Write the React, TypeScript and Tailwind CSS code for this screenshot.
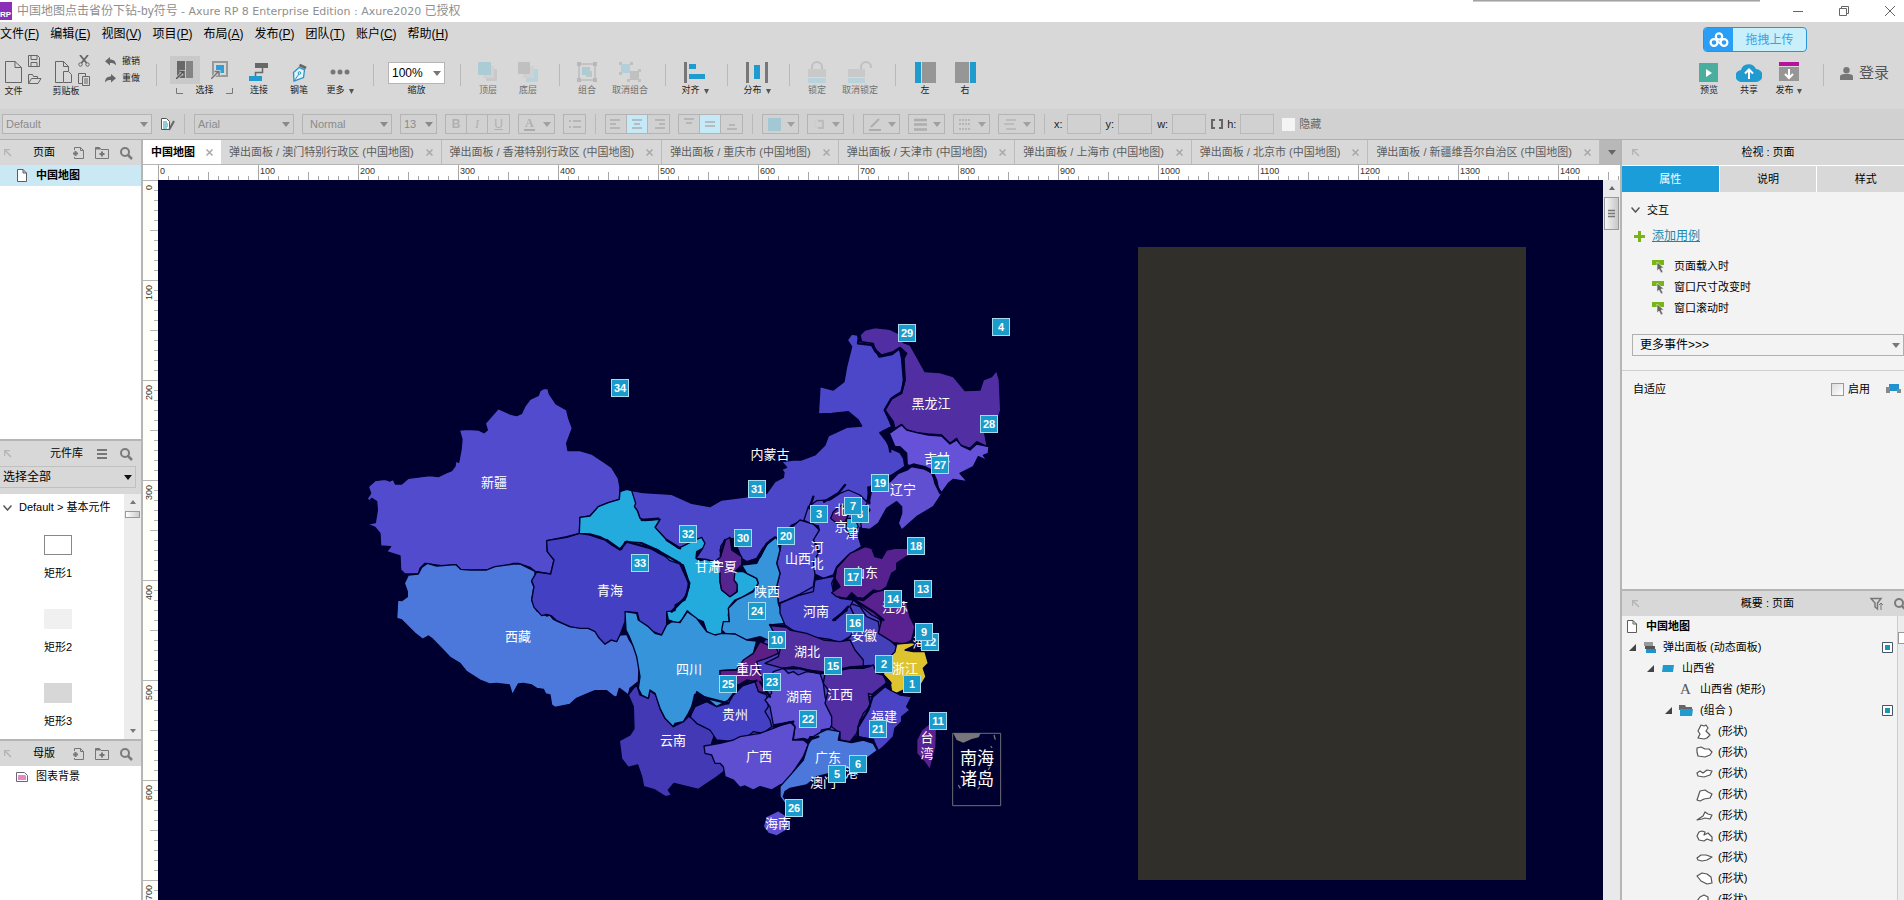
import type { ReactNode } from 'react'

const NAVY = '#000030'

type Shape = { fill: string; d: string }

// Province outlines, drawn at three times canvas scale in four sheets
const WEST: Shape[] = [
  { fill: '#524bce', d: '55,350 75,332 105,328 120,333 130,328 136,342 155,342 175,325 215,320 240,317 265,320 290,308 305,302 315,288 318,272 326,277 333,240 336,208 328,180 355,178 385,180 402,188 412,180 406,160 445,116 480,132 500,137 515,130 525,108 540,88 565,76 570,62 582,55 594,56 598,72 618,102 650,120 656,145 667,175 650,220 654,242 690,242 725,252 760,275 785,292 805,325 810,352 808,388 775,398 745,410 720,438 690,442 688,490 650,500 590,512 592,545 612,570 602,612 555,604 540,592 505,580 490,580 470,590 430,592 410,600 350,602 330,598 318,584 280,588 225,580 210,595 205,612 165,612 152,600 150,558 110,545 122,530 92,528 90,490 75,472 52,462 76,458 82,420 80,395 65,385 57,394 52,385 62,370' },
  { fill: '#4b78da', d: '205,612 215,592 232,580 260,588 318,584 332,598 360,600 410,600 435,590 490,582 510,582 555,604 555,618 545,635 552,650 545,690 560,722 590,738 600,735 610,748 660,770 715,775 735,780 745,800 765,822 785,810 800,812 810,795 830,793 838,810 855,835 868,885 865,935 840,955 835,975 808,955 800,982 790,978 770,962 735,962 715,970 680,985 660,1003 615,1012 605,1005 600,975 587,972 580,958 560,955 545,945 520,940 505,942 487,975 478,945 440,940 420,942 390,930 350,905 330,880 300,862 270,830 245,805 235,798 218,808 195,790 155,750 140,745 143,690 155,692 172,680 172,665 163,640 175,615' },
  { fill: '#4340c3', d: '590,512 650,502 690,490 720,495 765,510 785,525 810,540 820,512 850,515 875,520 930,552 1000,585 1000,600 1015,640 1015,660 1000,690 975,705 978,725 950,730 950,765 935,795 910,785 895,782 870,760 862,728 828,725 825,755 812,790 800,815 783,810 765,822 748,805 735,785 715,775 690,775 660,770 620,752 605,738 590,733 575,737 552,712 545,690 552,650 545,632 560,606 602,612 612,570 592,545' },
]

const CENTRE: Shape[] = [
  { fill: '#4840bd', d: '540,440 600,440 700,410 700,470 780,480 840,540 860,610 850,700 850,750 780,850 770,890 700,880 620,895 560,885 500,890 440,920 350,900 300,840 400,770 470,700 470,640 520,560' },
  { fill: '#4c47c9', d: '95,152 130,158 215,163 275,190 330,200 365,180 430,172 500,160 525,125 550,112 552,98 545,88 560,82 545,65 580,60 605,60 645,45 675,15 685,-12 740,-38 785,-42 775,-60 745,-85 695,-80 655,-78 660,-160 700,-150 732,-175 740,-220 755,-280 742,-300 755,-318 772,-315 780,-295 810,-292 825,-265 845,-250 880,-262 900,-275 905,-240 910,-180 905,-145 880,-130 855,-90 875,-40 845,-25 870,25 905,40 920,75 895,95 865,110 810,140 802,180 790,195 760,220 700,240 650,250 600,245 575,255 560,275 545,300 520,295 500,310 485,330 470,355 440,365 425,355 415,330 400,295 375,300 360,330 365,355 345,365 318,358 288,355 308,325 262,312 235,325 200,300 165,262 180,238 135,242 120,235 112,212 103,200' },
  { fill: '#22abdc', d: '-60,232 -30,228 -5,200 25,188 58,178 60,155 80,148 95,152 107,190 103,200 112,212 120,235 135,242 180,238 165,262 200,300 235,325 262,312 285,300 305,292 315,310 308,325 290,335 288,355 300,362 318,358 345,368 360,395 360,425 365,450 390,470 412,455 410,430 400,420 402,395 430,395 470,415 475,430 460,452 430,470 405,480 388,500 385,525 388,545 370,558 362,590 330,582 320,575 310,545 285,535 262,512 245,540 235,550 205,540 200,515 225,512 228,495 255,480 262,455 268,440 262,410 250,375 210,362 175,330 125,308 75,305 65,328 55,325 20,300 0,290 -30,282 -62,280' },
  { fill: '#534bcd', d: '612,240 625,200 650,182 690,180 720,160 745,150 780,165 800,185 825,215 825,240 805,265 780,262 775,290 785,320 745,345 710,380 700,405 670,415 640,400 640,365 660,330 640,300 658,270 655,258 630,252' },
  { fill: '#5c2286', d: '700,215 725,195 750,215 735,245 710,250 692,235' },
  { fill: '#22abdc', d: '740,235 765,235 775,260 750,290 738,265' },
  { fill: '#5049c9', d: '545,300 560,275 600,240 640,252 658,270 640,300 655,340 640,365 645,405 640,440 600,462 560,480 535,490 530,440 540,400 530,370 540,330' },
  { fill: '#3594da', d: '530,292 540,330 530,370 540,400 530,440 535,490 545,520 555,550 510,555 530,590 505,600 480,590 440,600 405,582 375,580 365,570 370,545 388,545 385,505 410,480 460,455 475,430 470,415 440,400 425,375 470,370 490,330 510,300' },
  { fill: '#55248f', d: '375,300 390,292 395,330 425,350 425,375 405,395 402,420 412,435 410,455 390,470 365,450 360,425 360,400 345,365 362,350 362,320' },
  { fill: '#4340b8', d: '750,490 780,500 800,530 835,545 840,580 870,600 890,620 890,640 850,670 850,700 820,690 780,680 760,690 740,640 730,610 750,590 735,560 700,545 720,520 740,505' },
  { fill: '#4340c3', d: '540,490 600,465 640,455 645,420 670,415 705,408 695,430 700,455 720,475 760,480 750,500 760,520 770,560 750,590 720,608 690,598 600,585 555,555 540,520' },
  { fill: '#4339b5', d: '85,765 100,745 110,735 120,765 145,775 150,752 168,765 180,805 195,835 220,860 250,845 270,825 290,850 330,870 345,880 335,910 368,920 397,975 349,1012 295,1048 222,1030 205,1050 215,1066 196,1070 165,1050 131,1040 125,1010 113,975 85,982 65,957 58,902 90,885 102,866 100,800' },
  { fill: '#3594da', d: '75,515 110,520 115,540 145,560 165,580 185,585 200,555 215,545 240,548 262,515 290,535 320,575 345,585 365,580 405,582 440,600 470,603 460,640 430,662 410,688 360,692 362,710 385,728 400,760 385,780 350,800 320,775 290,755 280,790 265,820 250,845 225,850 220,860 195,835 180,805 165,760 150,750 145,775 125,765 115,745 120,710 110,650 100,620 88,590 78,570' },
  { fill: '#5d1f86', d: '460,640 480,605 530,625 535,640 500,655 470,665 480,700 490,730 500,760 475,755 465,725 440,720 415,735 385,725 360,705 360,692 410,690 430,660' },
  { fill: '#4340c3', d: '385,790 400,765 430,735 465,725 475,755 500,765 505,800 495,815 510,840 515,860 490,880 460,875 430,900 400,905 350,900 330,870 290,850 270,830 285,800 320,785 350,800' },
]

const SOUTH: Shape[] = [
  { fill: '#562290', d: '290,85 330,40 375,20 395,25 405,50 425,55 440,30 465,25 500,25 530,40 500,50 470,70 470,90 455,100 440,140 420,155 400,150 370,175 350,172 335,158 320,175 290,170 275,158 300,140 285,115' },
  { fill: '#5a2190', d: '330,172 350,178 370,182 400,158 430,150 460,160 500,190 510,230 525,260 515,300 495,312 460,308 440,295 415,280 425,240 395,225 370,205' },
  { fill: '#ddc42f', d: '470,312 520,308 525,315 495,330 520,335 555,335 565,370 550,385 558,410 540,440 520,460 490,450 470,460 455,455 450,425 430,405 432,385 455,370 455,345 465,335' },
  { fill: '#512f9e', d: '90,255 130,255 150,270 200,280 250,300 300,305 330,300 345,330 370,360 370,380 330,385 255,400 245,395 200,390 160,380 130,385 75,370 115,350 120,330 110,300 100,275' },
  { fill: '#5d4fd0', d: '130,385 145,400 160,395 175,405 200,395 240,400 250,430 255,470 270,510 280,545 270,565 245,570 235,590 210,590 205,600 190,595 160,600 165,560 155,545 100,555 90,500 75,480 95,460 90,430 100,395' },
  { fill: '#512fa2', d: '255,400 330,385 370,385 400,375 410,400 430,405 440,430 400,465 385,460 390,495 360,540 350,580 330,605 300,600 300,580 275,560 275,530 255,490 265,450 250,430' },
  { fill: '#4a43c4', d: '400,470 435,440 450,450 480,465 515,470 500,500 510,510 485,530 485,545 465,565 460,590 430,620 415,632 400,600 355,590 355,560 370,520 390,500 388,470' },
  { fill: '#5d4fd0', d: '-108,618 -60,610 -20,600 0,590 60,580 100,565 150,545 165,560 158,600 190,600 205,612 190,650 160,695 140,730 120,735 95,750 60,740 40,750 15,738 0,742 -20,720 -45,710 -50,680 -60,670 -75,670 -85,645 -105,640' },
  { fill: '#4b78da', d: '220,590 240,578 262,568 300,575 295,600 335,608 370,600 400,610 412,632 380,655 350,680 310,690 270,700 230,710 200,735 150,745 135,755 130,770 145,790 135,792 120,770 120,740 160,695 190,660 205,612' },
  { fill: '#5d4fd0', d: '115,812 135,825 150,850 140,870 110,888 85,880 70,860 78,830' },
  { fill: '#5a2190', d: '575,545 590,560 588,620 575,670 570,690 555,668 530,640 530,600 545,570' },
]

const NORTH_EAST: Shape[] = [
  { fill: '#512fa2', d: '270,75 285,60 315,53 360,58 385,70 400,98 420,105 440,140 465,185 510,188 550,200 585,242 630,240 640,210 665,200 680,182 688,210 692,300 680,340 640,345 645,375 652,410 620,395 600,415 570,405 560,385 540,400 515,375 475,372 440,368 410,360 395,343 375,355 370,335 345,300 365,265 395,250 405,210 400,150 410,130 390,112 370,125 335,135 315,118 310,100 275,95' },
  { fill: '#6652d8', d: '375,358 395,345 410,360 440,368 475,375 515,378 540,402 560,390 575,408 600,420 620,402 657,410 655,430 640,436 652,452 625,440 610,470 570,490 592,515 550,508 535,520 515,548 505,535 500,510 485,480 465,470 430,462 412,470 410,430 390,410 375,410 358,370' },
  { fill: '#614fd2', d: '430,465 465,475 485,490 495,515 515,552 490,590 440,620 395,660 385,640 395,610 395,590 380,575 350,595 325,640 300,658 275,655 272,640 300,600 288,585 300,565 305,540 360,515 385,490 412,480' },
]

// Wider gaps where neighbouring provinces pull apart
const GAPS: { at: string; d: string }[] = [
  { at: 'translate(612 130) scale(.33333)', d: 'M742 612 738 640 782 645 802 680 840 672 862 655 M862 655 875 690 878 750 868 788 838 806 818 840 845 895 M805 908 830 940 835 965 M862 962 876 985 880 1010 850 1030 828 1050 M885 1006 935 1015 965 1030 970 1060 985 1090' },
  { at: 'translate(600 440) scale(.33333)', d: 'M640 170 628 205 M672 185 715 160 735 135 M805 142 808 190 M125 240 175 236 M240 325 200 300 M20 300 60 328 80 305 170 330 240 370 268 430 258 470 215 515 M480 350 500 312 525 292 M375 300 362 345 M430 735 470 722 M480 725 510 770 M270 830 285 765 385 790 M700 540 740 510 M510 555 555 560' },
  { at: 'translate(740 540) scale(.33333)', d: 'M130 385 180 385 240 400 330 382 390 378 M440 430 400 462 385 510 355 560 M100 560 160 545 M355 592 400 600 M205 600 235 590 M330 172 400 215 430 240 M285 240 325 200 M425 400 452 430' },
]

const LABELS: [string, number, number][] = [
  ['新疆', 494, 482], ['西藏', 518, 636], ['青海', 610, 590], ['内蒙古', 770, 454],
  ['甘肃', 708, 566], ['宁夏', 724, 566], ['陕西', 767, 591], ['山西', 798, 558],
  ['河', 817, 547], ['北', 817, 563], ['北', 841, 509], ['京', 841, 526],
  ['津', 852, 533], ['山东', 865, 572], ['河南', 816, 611], ['安徽', 864, 635],
  ['江苏', 895, 607], ['湖北', 807, 651], ['重庆', 749, 669], ['四川', 689, 669],
  ['贵州', 735, 714], ['湖南', 799, 696], ['江西', 840, 694], ['浙江', 905, 668],
  ['福建', 884, 716], ['云南', 673, 740], ['广西', 759, 756], ['广东', 828, 757],
  ['澳门', 823, 782], ['香港', 845, 772], ['海南', 778, 823], ['海', 919, 642],
  ['台', 927, 737], ['湾', 927, 753], ['黑龙江', 931, 403], ['吉林', 937, 458],
  ['辽宁', 903, 489],
]

const BADGES: [number, number, number][] = [
  [34, 620, 388], [33, 640, 563], [32, 688, 534], [31, 757, 489], [30, 743, 538],
  [29, 907, 333], [28, 989, 424], [27, 940, 465], [26, 794, 808], [25, 728, 684],
  [24, 757, 611], [23, 772, 682], [22, 808, 719], [21, 878, 729], [20, 786, 536],
  [19, 880, 483], [18, 916, 546], [17, 853, 577], [16, 855, 623], [15, 833, 666],
  [14, 893, 599], [13, 923, 589], [12, 930, 642], [11, 938, 721], [10, 777, 640],
  [9, 924, 632], [8, 860, 514], [7, 853, 506], [6, 858, 764], [5, 837, 774],
  [4, 1001, 327], [3, 819, 514], [2, 884, 664], [1, 912, 684],
]

function Sheet({ shapes, at }: { shapes: Shape[]; at: string }) {
  return (
    <g transform={at} stroke={NAVY} strokeWidth={4} strokeLinejoin="round">
      {shapes.map((s, i) => <polygon key={i} points={s.d} fill={s.fill} />)}
    </g>
  )
}

function Canvas() {
  return (
    <div className="relative min-w-0 flex-1 overflow-hidden bg-[#000030]">
      <svg className="absolute left-0 top-0 h-[720px] w-[1446px]" viewBox="158 180 1446 720">
        <Sheet shapes={WEST} at="translate(350 370) scale(.33333)" />
        <Sheet shapes={CENTRE} at="translate(600 440) scale(.33333)" />
        <Sheet shapes={SOUTH} at="translate(740 540) scale(.33333)" />
        <Sheet shapes={NORTH_EAST} at="translate(770 310) scale(.33333)" />
        {GAPS.map((g, i) => (
          <g key={i} transform={g.at}>
            <path d={g.d} fill="none" stroke={NAVY} strokeWidth={7} strokeLinejoin="round" strokeLinecap="round" />
          </g>
        ))}
        <g transform="translate(740 540) scale(.33333)">
          <path d="M638 580H782V797H638z" fill="none" stroke="#6c6c76" strokeWidth={3} />
          <path d="M640 580H722L716 592 695 597 670 608 650 600z" fill="#77777b" />
          <path d="M762 585l4 14M752 618l4 6M655 735l6 10M713 748l6-8M745 690l5-10" stroke="#77777b" strokeWidth={4} />
        </g>
        <g fill="#fff" textAnchor="middle" className="font-['Noto_Sans_CJK_SC',sans-serif] text-[13px]">
          {LABELS.map(([t, x, y], i) => <text key={i} x={x} y={y + 5}>{t}</text>)}
          <g className="text-[17px]">
            <text x={977} y={764}>南海</text>
            <text x={977} y={785}>诸岛</text>
          </g>
        </g>
      </svg>
      <div className="absolute left-[980px] top-[67px] h-[633px] w-[388px] bg-[#302f2a]" />
      {BADGES.map(([n, x, y]) => (
        <div
          key={n}
          className="absolute flex size-[18px] items-center justify-center border border-[#a5dcee] bg-[#1b9bcb] text-[11px] font-bold text-white"
          style={{ left: x - 167, top: y - 189 }}
        >
          {n}
        </div>
      ))}
    </div>
  )
}

function Icon({ w = 16, h = 16, children }: { w?: number; h?: number; children: ReactNode }) {
  return (
    <svg width={w} height={h} viewBox={`0 0 ${w} ${h}`} fill="none" className="shrink-0" aria-hidden="true">
      {children}
    </svg>
  )
}

const Caret = ({ fill = '#8a8a8a' }: { fill?: string }) => (
  <Icon w={8} h={5}><path d="M0 0h8L4 5z" fill={fill} /></Icon>
)

const DocIcon = () => (
  <Icon w={10} h={13}><path d="M.5.5h5.500l3.500 3.500v8.500h-9zM6 .5V4h3.500" stroke="#5c5c5c" fill="#fff" /></Icon>
)

const Search = () => (
  <Icon w={14} h={14}>
    <circle cx="6" cy="6" r="4" stroke="#7b7b7b" strokeWidth="2" />
    <path d="M9 9l4 4" stroke="#7b7b7b" strokeWidth="2.500" />
  </Icon>
)

const AddPage = () => (
  <Icon w={18} h={14}>
    <path d="M7.500 4V1.500h6l3 3v8h-9V11M13.500 1.500v3h3" stroke="#777" />
    <path d="M8.500 5v5M6 7.500h5" stroke="#777" strokeWidth="2" />
  </Icon>
)

const AddFolder = () => (
  <Icon w={14} h={14}>
    <path d="M.5 12.500v-11h4l1.500 2h7.500v9z" stroke="#777" />
    <path d="M.5 1.500h4l1 2h-5z" fill="#777" />
    <path d="M7 5.500v5M4.500 8h5" stroke="#777" strokeWidth="2" />
  </Icon>
)

const Burger = () => (
  <Icon w={14} h={14}><path d="M2 3h10M2 7h10M2 11h10" stroke="#777" strokeWidth="2" /></Icon>
)

const DockArrow = () => (
  <Icon w={8} h={8}><path d="M.5 6V.5H6M1 1l6 6" stroke="#b5b5b5" strokeWidth="1.500" /></Icon>
)

function Select({ label, value, box, text = 'text-[11px] text-[#8b8b8b]', caret }: {
  label: string; value: string; box: string; text?: string; caret?: string
}) {
  return (
    <div className={`relative flex shrink-0 items-center border ${box}`}>
      <select aria-label={label} className={`h-full w-full appearance-none bg-transparent pl-[3px] outline-none ${text}`}>
        <option>{value}</option>
      </select>
      <span className="pointer-events-none absolute right-[3px]"><Caret fill={caret} /></span>
    </div>
  )
}

function Tool({ icon, label, width = 'w-10', more, dim }: {
  icon: ReactNode; label: string; width?: string; more?: boolean; dim?: boolean
}) {
  return (
    <button className={`flex shrink-0 flex-col items-center pt-1 ${width} ${dim ? 'text-[#6f6f6f]' : 'text-[#222]'}`}>
      <span className={`flex h-[26px] items-center ${dim ? 'opacity-50' : ''}`}>{icon}</span>
      <span className="flex h-3 items-center gap-1 whitespace-nowrap text-[9px]">
        {label}
        {more && <Icon w={5} h={5}><path d="M0 0h5L2.500 5z" fill="#555" /></Icon>}
      </span>
    </button>
  )
}

const Sep = ({ gap }: { gap: string }) => <div className={`mt-[9px] h-[22px] w-px shrink-0 bg-[#b9b9b9] ${gap}`} />

function TitleBar() {
  return (
    <header className="relative flex h-[22px] shrink-0 items-center bg-white">
      <div className="absolute left-[1473px] top-0 h-[2px] w-[287px] bg-gradient-to-b from-[#8f8f8f] to-[#e0e0e0]" />
      <Icon w={12} h={18}>
        <path d="M0 0h12v18H0z" fill="#8a2fb8" />
        <text x="0" y="15" fontSize="8" fontWeight="700" fill="#fff">RP</text>
      </Icon>
      <h1 className="ml-[5px] whitespace-nowrap text-[12px] text-[#8f8f8f]">
        中国地图点击省份下钻-by符号{' '}
        <span className="font-['DejaVu_Sans',sans-serif] text-[11px]">- Axure RP 8 Enterprise Edition : Axure2020</span>{' '}
        已授权
      </h1>
      <div className="ml-auto flex items-center gap-9 pr-[9px]">
        <button aria-label="最小化"><Icon w={10} h={10}><path d="M0 5.500h10" stroke="#666" /></Icon></button>
        <button aria-label="还原"><Icon w={10} h={10}><path d="M.5 2.500h7v7h-7zM2.500 2.500v-2h7v7h-2" stroke="#666" /></Icon></button>
        <button aria-label="关闭"><Icon w={10} h={10}><path d="M0 0l10 10M10 0L0 10" stroke="#666" /></Icon></button>
      </div>
    </header>
  )
}

const MENUS = [
  ['文件', 'F'], ['编辑', 'E'], ['视图', 'V'], ['项目', 'P'], ['布局', 'A'],
  ['发布', 'P'], ['团队', 'T'], ['账户', 'C'], ['帮助', 'H'],
]

function MenuBar() {
  return (
    <nav className="flex h-6 shrink-0 items-center gap-[11px] text-[12px] text-black">
      {MENUS.map(([name, key]) => (
        <button key={name} className="whitespace-nowrap">{name}(<u>{key}</u>)</button>
      ))}
      <button className="ml-auto mr-[97px] mt-[5px] flex h-[25px] w-[104px] self-start overflow-hidden rounded-[4px] border border-[#2b93dc] bg-[#c9effb]">
        <span className="flex h-full w-[29px] items-center justify-center bg-[#2a9df4]">
          <Icon w={20} h={16}>
            <g stroke="#fff" strokeWidth="2.200">
              <circle cx="10" cy="4.500" r="3.200" />
              <circle cx="5" cy="10.500" r="3.400" />
              <circle cx="15" cy="10.500" r="3.400" />
              <path d="M8 9l5 4" />
            </g>
          </Icon>
        </span>
        <span className="flex h-full flex-1 items-center justify-center text-[12px] text-[#3d9fe0]">拖拽上传</span>
      </button>
    </nav>
  )
}

function Toolbar() {
  return (
    <div className="flex h-[63px] shrink-0 items-start pt-[9px]">
      <div className="flex w-12 shrink-0 gap-[5px] pl-1">
        <button className="flex w-[19px] flex-col items-center pt-1">
          <span className="flex h-[26px] items-center">
            <Icon w={17} h={22}><path d="M.5.5h9.500l6.500 6v15H.5zM10 .5v6h6.500" stroke="#666" /></Icon>
          </span>
          <span className="whitespace-nowrap text-[9px] text-[#222]">文件</span>
        </button>
        <div className="flex flex-col gap-[6px]">
          <button aria-label="保存"><Icon w={12} h={12}><path d="M.5.5h9l2 2v9H.5zM3 .5v4h6v-4M3 11.500v-4h6v4" stroke="#666" /></Icon></button>
          <button aria-label="打开"><Icon w={14} h={12}><path d="M.5 10.500v-9h4l1 2h4v2M.5 10.500l3-5h9.500l-3 5z" stroke="#666" /></Icon></button>
        </div>
      </div>
      <div className="flex w-[50px] shrink-0 gap-[5px] pl-[5px]">
        <button className="flex w-[20px] flex-col items-center pt-1">
          <span className="flex h-[26px] items-center">
            <Icon w={17} h={22}><path d="M8 21.500H.5V.5h8l5 5V10M8.500 .5v5h5M8.500 10.500h5l3 3v8h-8z" stroke="#666" /></Icon>
          </span>
          <span className="whitespace-nowrap pl-[6px] text-[9px] text-[#222]">剪贴板</span>
        </button>
        <div className="flex flex-col gap-[6px]">
          <button aria-label="剪切">
            <Icon w={12} h={12}>
              <path d="M2 0l6.500 8M10 0L3.500 8" stroke="#666" strokeWidth="1.800" />
              <circle cx="2.500" cy="9.500" r="1.700" stroke="#666" /><circle cx="9.500" cy="9.500" r="1.700" stroke="#666" />
            </Icon>
          </button>
          <button aria-label="粘贴"><Icon w={12} h={13}><path d="M4 10.500H.5V.5h7V3M4.500 3.500h7v9h-7zM6 6h4M6 8h4M6 10h4" stroke="#666" /></Icon></button>
        </div>
      </div>
      <div className="flex w-[58px] shrink-0 flex-col gap-1 pl-[7px] text-[9px] text-[#222]">
        <button className="flex h-[13px] items-center gap-[6px]">
          <Icon w={11} h={9}><path d="M5 0v2.500c4 0 6 2 6 6-1.500-2-3-2.500-6-2.500v2.500L0 4.200z" fill="#666" /></Icon>撤销
        </button>
        <button className="flex h-[13px] items-center gap-[6px]">
          <Icon w={11} h={9}><path d="M6 0v2.500c-4 0-6 2-6 6 1.500-2 3-2.500 6-2.500v2.500l5-4.300z" fill="#666" /></Icon>重做
        </button>
      </div>
      <Sep gap="mr-[13px]" />
      <div className="w-[69px] shrink-0 pt-px">
        <div className="flex h-[29px] items-start gap-[11px]">
          <button aria-label="相交选中" className="flex h-7 w-[30px] items-center justify-center bg-[#c9c9c9]">
            <Icon w={18} h={18}>
              <path d="M1 0h8v17H1z" fill="#686868" /><path d="M10 0h7v17h-7z" fill="#848484" />
              <path d="M0 18l7-7M3.500 10.500H8V15" stroke="#c9c9c9" strokeWidth="3" /><path d="M0 18l7-7M3.500 10.500H8V15" stroke="#555" strokeWidth="1.500" />
            </Icon>
          </button>
          <button aria-label="包含选中" className="flex h-7 items-center">
            <Icon w={18} h={18}>
              <path d="M2 1h14v14H2z" stroke="#999" strokeWidth="2" /><path d="M5 4h8v8H5z" fill="#2f9fd8" />
              <path d="M0 18l7-7M3.500 10.500H8V15" stroke="#d8d8d8" strokeWidth="3" /><path d="M0 18l7-7M3.500 10.500H8V15" stroke="#777" strokeWidth="1.500" />
            </Icon>
          </button>
        </div>
        <div className="flex h-3 items-center justify-between px-[6px] text-[9px] text-[#222]">
          <Icon w={7} h={6}><path d="M.5 0v5.500H7" stroke="#777" /></Icon>选择<Icon w={7} h={6}><path d="M6.500 0v5.500H0" stroke="#777" /></Icon>
        </div>
      </div>
      <Tool label="连接" icon={<Icon w={20} h={20}><path d="M6 1h13v5H6z" fill="#686868" /><path d="M0 14h13v5H0z" fill="#1f9bd0" /><path d="M13.500 6v4.500h-7V14" stroke="#686868" strokeWidth="1.500" /></Icon>} />
      <Tool label="钢笔" icon={<Icon w={15} h={19}><path d="M2 18L1.500 9.500 7 4.500l5.500 2.500-1 7.500z" fill="#e5f4fa" stroke="#2394c8" strokeWidth="1.300" /><path d="M2 18l5-7" stroke="#2394c8" /><circle cx="7.500" cy="10" r="1.300" stroke="#2394c8" /><path d="M7.500 2l6.500 3" stroke="#666" strokeWidth="3" /></Icon>} />
      <Tool label="更多" more width="w-[42px]" icon={<Icon w={20} h={6}><g fill="#777"><circle cx="3" cy="3" r="2.500" /><circle cx="10" cy="3" r="2.500" /><circle cx="17" cy="3" r="2.500" /></g></Icon>} />
      <Sep gap="ml-3 mr-[14px]" />
      <div className="flex w-[57px] shrink-0 flex-col items-center pt-[7px] text-[9px] text-[#222]">
        <Select label="缩放" value="100%" box="h-[22px] w-full border-[#b5b5b5] bg-white" text="text-[12px] text-black" caret="#777" />
        <span>缩放</span>
      </div>
      <Sep gap="ml-[15px] mr-[7px]" />
      <Tool dim label="顶层" icon={<Icon w={20} h={22}><path d="M8 8h11v12H8z" fill="#bbb" /><path d="M5 5h11v12H5z" fill="#ccc" /><rect width="13" height="13" y="1" rx="1" fill="#7fc0d4" /></Icon>} />
      <Tool dim label="底层" icon={<Icon w={20} h={22}><path d="M8 8h12v13H8z" fill="#9ccfe2" /><path d="M5 5h11v12H5z" fill="#ccc" /><rect width="12" height="12" y="1" rx="1" fill="#aaa" /></Icon>} />
      <Sep gap="ml-[11px] mr-[7px]" />
      <Tool dim label="组合" icon={<Icon w={20} h={22}><path d="M2 3h16v16H2z" stroke="#888" /><path d="M5 6h8v8H5z" fill="#7fc0d4" /><path d="M9 10h6v6H9z" fill="#9bb" /><path d="M0 1h4v4H0zM16 1h4v4h-4zM0 17h4v4H0zM16 17h4v4h-4z" fill="#999" /></Icon>} />
      <Tool dim label="取消组合" width="w-[46px]" icon={<Icon w={22} h={22}><path d="M2 3h9v9H2z" fill="#8fc8da" /><path d="M11 10h9v9h-9z" fill="#aaa" /><path d="M0 1h3v3H0zM11 1h3v3h-3zM0 11h3v3H0zM19 8h3v3h-3zM8 18h3v3H8zM19 18h3v3h-3z" fill="#aaa" /></Icon>} />
      <Sep gap="ml-3 mr-2" />
      <Tool label="对齐" more width="w-[42px]" icon={<Icon w={22} h={22}><path d="M0 1h3v21H0z" fill="#777" /><path d="M5 3h7v5H5zM5 13h16v5H5z" fill="#1f9bd0" /></Icon>} />
      <Sep gap="ml-[11px] mr-2" />
      <Tool label="分布" more width="w-[42px]" icon={<Icon w={22} h={22}><path d="M0 1h3v21H0zM19 1h3v21h-3z" fill="#777" /><path d="M8 4h6v14H8z" fill="#1f9bd0" /></Icon>} />
      <Sep gap="ml-[11px] mr-[7px]" />
      <Tool dim label="锁定" icon={<Icon w={18} h={22}><path d="M4 9V6a5 5 0 0110 0v3" stroke="#aaa" strokeWidth="2" /><path d="M0 8h18v8H0z" fill="#bbb" /><path d="M0 17h18v5H0z" fill="#9ccfe2" /></Icon>} />
      <Tool dim label="取消锁定" width="w-[46px]" icon={<Icon w={26} h={22}><path d="M14 9V6a5 5 0 0110 0v1" stroke="#aaa" strokeWidth="2" /><path d="M1 8h17v8H1z" fill="#bbb" /><path d="M1 17h17v5H1z" fill="#9ccfe2" /></Icon>} />
      <Sep gap="ml-3 mr-[9px]" />
      <Tool label="左" icon={<Icon w={21} h={21}><path d="M0 0h6v21H0z" fill="#1f9bd0" /><path d="M7 0h14v21H7z" fill="#969696" /></Icon>} />
      <Tool label="右" icon={<Icon w={21} h={21}><path d="M15 0h6v21h-6z" fill="#1f9bd0" /><path d="M0 0h14v21H0z" fill="#969696" /></Icon>} />
      <div className="ml-auto flex shrink-0 items-start pr-[15px]">
        <Tool label="预览" icon={<Icon w={19} h={19}><path d="M0 0h19v19H0z" fill="#4aae9f" /><path d="M7 6l6 4-6 4z" fill="#fff" /></Icon>} />
        <Tool label="共享" icon={<Icon w={26} h={20}><path d="M6 20a6 6 0 01-1-12 8 8 0 0115-1 6.500 6.500 0 010 13z" fill="#1f9bd0" /><path d="M13 17V8M9 11.500l4-4 4 4" stroke="#fff" strokeWidth="2" /></Icon>} />
        <Tool label="发布" more icon={<Icon w={20} h={20}><path d="M0 0h20v4H0z" fill="#b5139c" /><path d="M0 5h20v14H0z" fill="#969696" /><path d="M10 7v9M6 12l4 4 4-4" stroke="#fff" strokeWidth="2" /></Icon>} />
        <Sep gap="ml-[14px] mr-4" />
        <button className="flex h-9 items-center gap-[6px] text-[15px] text-[#555]">
          <Icon w={13} h={13}><circle cx="6.500" cy="3.200" r="3.200" fill="#777" /><path d="M0 13v-3.500C0 7.500 3 7 6.500 7S13 7.500 13 9.500V13z" fill="#777" /></Icon>
          登录
        </button>
      </div>
    </div>
  )
}

// Boxed style-bar group; `on` marks the lit segment
function Segments({ items, on }: { items: ReactNode[]; on?: number }) {
  return (
    <div className="flex h-5 shrink-0 divide-x divide-[#b4b4b4] border border-[#b4b4b4] text-[#b0b0b0]">
      {items.map((it, i) => (
        <button key={i} className={`flex w-[21px] items-center justify-center text-[12px] ${i === on ? 'bg-[#c5e9f6]' : ''}`}>{it}</button>
      ))}
    </div>
  )
}

function Drop({ children }: { children: ReactNode }) {
  return (
    <button className="flex h-5 w-[37px] shrink-0 items-center justify-between border border-[#b4b4b4] pl-[5px] pr-[3px]">
      {children}
      <Caret fill="#a0a0a0" />
    </button>
  )
}

const Lines = ({ d }: { d: string }) => <Icon w={12} h={12}><path d={d} stroke="#adadad" strokeWidth="1.500" /></Icon>

const Divider = () => <div className="mx-px h-5 w-px shrink-0 bg-[#b9b9b9]" />

function Coord({ name, link }: { name: string; link?: boolean }) {
  return (
    <label className="flex shrink-0 items-center gap-1 text-[11px] text-[#222]">
      {link && <Icon w={12} h={10}><path d="M4 1H1v8h3M8 1h3v8H8" stroke="#666" strokeWidth="2" /></Icon>}
      {name}:
      <input className="h-5 w-[34px] border border-[#b9b9b9] bg-transparent" />
    </label>
  )
}

function StyleBar() {
  return (
    <div className="flex h-[31px] shrink-0 items-center gap-2 border-b border-[#b0b0b0] bg-[#d1d1d1] pl-[2px]">
      <Select label="样式" value="Default" box="h-5 w-[150px] border-[#b4b4b4] bg-[#d8d8d8]" />
      <button aria-label="编辑样式">
        <Icon w={15} h={14}><path d="M1.500 1.500h5l3 3v8h-8z" fill="#fff" stroke="#555" /><path d="M3 5h4M3 7h5M3 9h5M3 11h4" stroke="#1f9bb0" /><path d="M14 4L9 13" stroke="#666" strokeWidth="2" /></Icon>
      </button>
      <Divider />
      <Select label="字体" value="Arial" box="h-5 w-[100px] border-[#b4b4b4]" />
      <Select label="字形" value="Normal" box="h-5 w-[90px] border-[#b4b4b4]" text="text-[11px] text-[#8b8b8b] indent-1" />
      <Select label="字号" value="13" box="h-5 w-[37px] border-[#b4b4b4]" />
      <Segments items={[<b>B</b>, <i className="font-['Liberation_Serif',serif]">I</i>, <u>U</u>]} />
      <Drop><span className="border-b-2 border-[#aaa] px-px font-['Liberation_Serif',serif] text-[12px] font-bold leading-3 text-[#b0b0b0]">A</span></Drop>
      <Segments items={[<Lines d="M4 3h8M4 9h8M0 3h2M0 9h2" />]} />
      <Divider />
      <Segments on={1} items={[<Lines d="M0 2h10M0 6h6M0 10h10" />, <Lines d="M1 2h10M3 6h6M1 10h10" />, <Lines d="M2 2h10M6 6h6M2 10h10" />]} />
      <Segments on={1} items={[<Lines d="M1 1h10M3 5h6" />, <Lines d="M1 4h10M1 8h10" />, <Lines d="M3 7h6M1 11h10" />]} />
      <Divider />
      <Drop><Icon w={13} h={13}><path d="M0 0h13v13H0z" fill="#a3c7d3" /></Icon></Drop>
      <Drop><Icon w={13} h={13}><path d="M2 2h7v7H2z" stroke="#cbcbcb" /><path d="M5 10h5V3H5" stroke="#bcbcbc" strokeWidth="2" /></Icon></Drop>
      <Divider />
      <Drop><Icon w={13} h={13}><path d="M0 12h12M2 9l8-8" stroke="#adadad" strokeWidth="2" /></Icon></Drop>
      <Drop><Icon w={13} h={13}><path d="M0 2h13M0 6.500h13M0 11.500h13" stroke="#adadad" strokeWidth="2.500" /></Icon></Drop>
      <Drop><Icon w={13} h={13}><path d="M0 2h12M0 6h12M0 11h12" stroke="#adadad" strokeWidth="1.500" strokeDasharray="2 1" /></Icon></Drop>
      <Drop><Icon w={13} h={13}><path d="M2 2h10M0 6h10M2 11h10" stroke="#b5b5b5" strokeWidth="1.500" /></Icon></Drop>
      <Divider />
      <div className="flex gap-[5px]">
        <Coord name="x" />
        <Coord name="y" />
        <Coord name="w" />
        <Coord name="h" link />
      </div>
      <label className="flex items-center gap-1 text-[11px] text-[#666]">
        <input type="checkbox" className="size-[13px] appearance-none bg-[#f4f4f4]" />
        隐藏
      </label>
    </div>
  )
}

function PanelHead({ title, children }: { title: string; children: ReactNode }) {
  return (
    <div className="flex h-[25px] shrink-0 items-center bg-[#d8d8d8] pl-1 pr-2">
      <DockArrow />
      <h2 className="ml-auto mr-3 text-[11px] text-black">{title}</h2>
      <div className="flex gap-[10px]">{children}</div>
    </div>
  )
}

const WIDGETS = [
  ['矩形1', 'border border-[#888] bg-white'],
  ['矩形2', 'bg-[#f0f0f0]'],
  ['矩形3', 'bg-[#d7d7d7]'],
]

function LeftSide() {
  return (
    <aside className="flex w-[143px] shrink-0 flex-col border-r-2 border-[#b5b5b5] bg-white text-[11px] text-black">
      <PanelHead title="页面"><AddPage /><AddFolder /><Search /></PanelHead>
      <div className="flex h-[21px] shrink-0 items-center gap-[9px] bg-[#cbe9f5] pl-[17px] font-bold"><DocIcon />中国地图</div>
      <div className="h-[253px] shrink-0" />
      <div className="border-t-2 border-[#b5b5b5]">
        <PanelHead title="元件库"><Burger /><Search /></PanelHead>
        <div className="bg-[#d8d8d8] pb-[6px]">
          <Select label="元件库" value="选择全部" box="h-[22px] w-[136px] border-[#c0c0c0] border-l-0" text="text-[12px] text-black" caret="#111" />
        </div>
      </div>
      <div className="flex h-[245px] shrink-0 overflow-hidden">
        <div className="flex flex-1 flex-col">
          <div className="mb-[14px] flex h-[27px] shrink-0 items-center gap-[7px] pl-[3px]">
            <Icon w={9} h={6}><path d="M.5.5l4 4.500 4-4.500" stroke="#555" strokeWidth="1.500" /></Icon>
            Default &gt; 基本元件
          </div>
          {WIDGETS.map(([name, look]) => (
            <div key={name} className="flex h-[74px] shrink-0 flex-col items-center gap-[10px] pr-2">
              <div className={`h-5 w-7 ${look}`} />
              <span>{name}</span>
            </div>
          ))}
        </div>
        <div className="flex w-[17px] flex-col items-center bg-[#ececec] py-[6px]">
          <Icon w={6} h={4}><path d="M0 4h6L3 0z" fill="#777" /></Icon>
          <div className="mt-[7px] h-[7px] w-[15px] border border-[#999] bg-gradient-to-r from-white to-[#ccc]" />
          <span className="mt-auto"><Icon w={6} h={4}><path d="M0 0h6L3 4z" fill="#777" /></Icon></span>
        </div>
      </div>
      <div className="border-t-2 border-[#b5b5b5]">
        <PanelHead title="母版"><AddPage /><AddFolder /><Search /></PanelHead>
        <div className="flex h-[21px] items-center gap-2 pl-4">
          <Icon w={12} h={10}><path d="M.5.5h8l3 3v6H.5z" stroke="#667" fill="#fff" /><path d="M2 3h7l1 1v4H2z" fill="#e986c4" /></Icon>
          图表背景
        </div>
      </div>
    </aside>
  )
}

const TABS = ['澳门特别行政区', '香港特别行政区', '重庆市', '天津市', '上海市', '北京市', '新疆维吾尔自治区']

const Cross = () => <Icon w={7} h={7}><path d="M.5.5l6 6M6.500.5l-6 6" stroke="#a8a8a8" strokeWidth="1.500" /></Icon>

function TabStrip() {
  return (
    <div className="flex h-[25px] shrink-0 items-stretch overflow-hidden border-b border-[#b5b5b5] bg-[#d8d8d8] text-[11px] text-[#5c5c5c]">
      <button className="flex shrink-0 items-center gap-[11px] bg-white px-2 font-bold text-black">中国地图<Cross /></button>
      {TABS.map(name => (
        <button key={name} className="flex shrink-0 items-center gap-3 whitespace-nowrap border-r border-[#bcbcbc] px-2">
          弹出面板 / {name} (中国地图)<Cross />
        </button>
      ))}
      <button aria-label="全部标签" className="ml-auto flex w-6 shrink-0 items-center justify-center bg-[#b8b8b8]"><Caret fill="#666" /></button>
    </div>
  )
}

const TICKS = [0, 1, 2, 3, 4, 5, 6, 7, 8, 9]

function TopRuler() {
  return (
    <div className="flex h-[15px] shrink-0 overflow-hidden bg-white pl-[15px]">
      {Array.from({ length: 15 }, (_, n) => (
        <div key={n} className="relative flex w-[100px] shrink-0 items-end">
          <span className="absolute left-[2px] top-0 text-[9px] leading-3 text-[#333]">{n * 100}</span>
          {TICKS.map(t => (
            <i key={t} className={`w-[10px] border-l border-[#a8a8a8] ${t === 0 ? 'h-[15px]' : t === 5 ? 'h-2' : 'h-1'}`} />
          ))}
        </div>
      ))}
    </div>
  )
}

function SideRuler() {
  return (
    <div className="w-[15px] shrink-0 overflow-hidden bg-[#fffffa]">
      {Array.from({ length: 8 }, (_, n) => (
        <div key={n} className="relative flex h-[100px] flex-col items-end">
          <span className="absolute left-px top-[5px] rotate-180 text-[9px] leading-[10px] text-[#333] [writing-mode:vertical-rl]">{n * 100}</span>
          {TICKS.map(t => (
            <i key={t} className={`h-[10px] border-t border-[#b5b5b5] ${t === 0 ? 'w-[15px]' : t === 5 ? 'w-2' : 'w-1'}`} />
          ))}
        </div>
      ))}
    </div>
  )
}

function Workspace() {
  return (
    <main className="flex min-w-0 flex-1 flex-col">
      <TabStrip />
      <TopRuler />
      <div className="flex min-h-0 flex-1">
        <SideRuler />
        <Canvas />
        <div className="flex w-[17px] shrink-0 flex-col items-center bg-[#e9e9ec] pt-[6px]">
          <Icon w={6} h={4}><path d="M0 4h6L3 0z" fill="#666" /></Icon>
          <div className="mt-[7px] flex h-[33px] w-[15px] items-center justify-center border border-[#999] bg-gradient-to-r from-[#f5f5f5] to-[#c8c8c8]">
            <Icon w={8} h={9}><path d="M0 1.500h7M0 4.500h7M0 7.500h7" stroke="#777" strokeWidth="1.500" /></Icon>
          </div>
        </div>
      </div>
    </main>
  )
}

const EVENTS = ['页面载入时', '窗口尺寸改变时', '窗口滚动时']

const BLOBS = [
  'M5 1l3 1 2-1 2 3-2 3 4 4-3 3-3 1-6-1 2-4-2-3z',
  'M1 3l4-1 4 2 4 0 3 3-2 3-5 2-7-1-1-4z',
  'M1 7l3-2 3 2 4-3 5 1-2 4-6 2-6-1z',
  'M1 13l3-9 5-1 3 2 4 2-2 4-6 1-4 2z',
  'M1 12l6-4 2-4 3 2 4 1-2 4-5-1-3 1z',
  'M6 2l3 1-1 3 4-2 4 4 0 4-5-2-3 2-5-1-2-4 2-4z',
  'M1 8l4-3 5 0 6 2-5 3-5 1-4-1z',
  'M1 5l5-3 5 1 4 3 1 6-5 1-6-3z',
  'M1 9l3-4 4-2 4 2 0 3 4 2-3 3-5-1-6 2z',
]

const Arrow = () => <Icon w={7} h={7}><path d="M7 0v7H0z" fill="#444" /></Icon>

const EyeBox = () => <Icon w={11} h={11}><path d="M.5.5h10v10H.5z" fill="#fff" stroke="#456" /><path d="M3 3h5v5H3z" fill="#1f93b8" /></Icon>

function RightSide() {
  return (
    <aside className="flex w-[284px] shrink-0 overflow-hidden border-l-2 border-[#b5b5b5] bg-[#f3f3f3] text-[11px] text-black">
      <div className="flex w-[292px] shrink-0 flex-col">
        <div className="flex h-[25px] shrink-0 items-center bg-[#d8d8d8] pl-[10px]">
          <DockArrow />
          <h2 className="flex-1 pr-[18px] text-center">检视 : 页面</h2>
        </div>
        <div className="grid h-[27px] shrink-0 grid-cols-3 gap-px border-t border-white bg-white">
          <button className="bg-[#1b9dd9] text-white">属性</button>
          <button className="bg-[#d8d8d8]">说明</button>
          <button className="bg-[#d8d8d8]">样式</button>
        </div>
        <div className="flex h-[179px] shrink-0 flex-col border-b border-[#cfcfcf] pt-2">
          <h3 className="flex h-5 items-center gap-[7px] pl-[9px]">
            <Icon w={9} h={6}><path d="M.5.5l4 4.500 4-4.500" stroke="#555" strokeWidth="1.500" /></Icon>交互
          </h3>
          <a href="#case" className="mt-[6px] flex h-5 items-center gap-[7px] pl-3 text-[12px] text-[#1787ae] underline">
            <Icon w={11} h={11}><path d="M5.500 0v11M0 5.500h11" stroke="#7ab518" strokeWidth="3" /></Icon>添加用例
          </a>
          <ul className="mt-[10px] pl-[30px]">
            {EVENTS.map(e => (
              <li key={e} className="flex h-[21px] items-center gap-[10px]">
                <Icon w={12} h={15}><path d="M0 1h12v5H0z" fill="#7ab518" /><path d="M5 3v9l2-2 2 4 2-1-2-4h3z" fill="#666" stroke="#f3f3f3" strokeWidth=".6" /></Icon>
                {e}
              </li>
            ))}
          </ul>
          <Select label="更多事件" value="更多事件>>>" box="mt-[15px] ml-[10px] h-[22px] w-[272px] border-[#b0b0b0]" text="text-[12px] text-black indent-1" caret="#777" />
        </div>
        <div className="flex h-[220px] shrink-0 items-start border-b-2 border-[#b5b5b5] pl-[11px] pt-[10px]">
          <span>自适应</span>
          <label className="ml-auto mr-4 flex items-center gap-1">
            <input type="checkbox" className="size-[13px] appearance-none border border-[#999] bg-gradient-to-br from-[#ddd] to-white" />
            启用
          </label>
          <span className="mr-3 mt-[3px]">
            <Icon w={16} h={10}><path d="M3 0h10v7H3z" fill="#1f93cf" /><path d="M0 3h4v6H0zM11 5h4v4h-4z" fill="#888" /><path d="M5 7h6v2H5z" fill="#f3f3f3" /></Icon>
          </span>
        </div>
        <div className="flex h-[25px] shrink-0 items-center bg-[#d8d8d8] pl-[10px]">
          <DockArrow />
          <h2 className="ml-auto">概要 : 页面</h2>
          <div className="ml-[76px] flex gap-[9px] pr-[7px]">
            <Icon w={14} h={14}><path d="M1 1.500h10L7.500 6v6L5 10V6z" stroke="#777" strokeWidth="1.500" /><path d="M11 13V6M9 8l2-2 2 2" stroke="#777" /></Icon>
            <Search />
          </div>
        </div>
        <div className="flex min-h-0 flex-1">
          <ul className="w-[275px] shrink-0 overflow-hidden [&>li]:flex [&>li]:h-[21px] [&>li]:items-center">
            <li className="gap-[9px] pl-[5px] font-bold"><DocIcon />中国地图</li>
            <li className="gap-[7px] pl-[7px] pr-1">
              <Arrow />
              <Icon w={13} h={12}><path d="M1 0h9v4H1z" fill="#999" /><path d="M2 4h10v3H2z" fill="#555" /><path d="M3 7h10v4H3z" fill="#1f93cf" /></Icon>
              弹出面板 (动态面板)
              <span className="ml-auto"><EyeBox /></span>
            </li>
            <li className="gap-2 pl-[25px]"><Arrow /><Icon w={12} h={7}><path d="M1 0h11l-1 7H0z" fill="#1f9bd0" /></Icon>山西省</li>
            <li className="gap-[9px] pl-[58px]"><span className="w-[11px] font-['Liberation_Serif',serif] text-[15px] text-[#555]">A</span>山西省 (矩形)</li>
            <li className="gap-[7px] pl-[43px] pr-1">
              <Arrow />
              <Icon w={14} h={11}><path d="M0 0h6l1 2h6v3H0z" fill="#666" /><path d="M1 4h13l-1 7H1z" fill="#1f9bd0" /></Icon>
              (组合 )
              <span className="ml-auto"><EyeBox /></span>
            </li>
            {BLOBS.map(d => (
              <li key={d} className="gap-[5px] pl-[74px]">
                <Icon w={17} h={16}><path d={d} stroke="#555" strokeWidth="1.200" fill="#fff" strokeLinejoin="round" /></Icon>
                (形状)
              </li>
            ))}
          </ul>
          <div className="flex-1 border-l border-[#ccc] bg-[#ececec] pt-4"><div className="h-3 border border-[#999] bg-white" /></div>
        </div>
      </div>
    </aside>
  )
}

export default function App() {
  return (
    <div className="flex h-screen flex-col overflow-hidden bg-[#d8d8d8] font-['Liberation_Sans','Noto_Sans_CJK_SC',sans-serif]">
      <TitleBar />
      <MenuBar />
      <Toolbar />
      <StyleBar />
      <div className="flex min-h-0 flex-1">
        <LeftSide />
        <Workspace />
        <RightSide />
      </div>
    </div>
  )
}
